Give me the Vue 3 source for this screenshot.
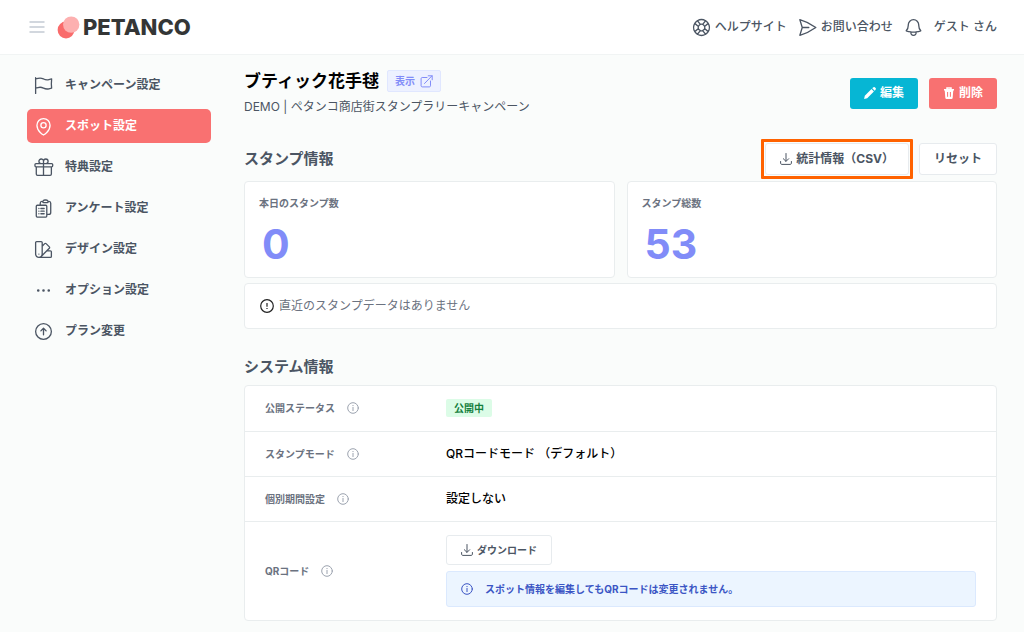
<script setup>
const nav = [
  {
    label: 'キャンペーン設定',
    icon: 'M3 3v1.5M3 21v-6m0 0 2.77-.693a9 9 0 0 1 6.208.682l.108.054a9 9 0 0 0 6.086.71l3.114-.732a48.524 48.524 0 0 1-.005-10.499l-3.11.732a9 9 0 0 1-6.085-.711l-.108-.054a9 9 0 0 0-6.208-.682L3 4.5M3 15V4.5',
  },
  {
    label: 'スポット設定',
    active: true,
    icon: 'M15 10.5a3 3 0 1 1-6 0 3 3 0 0 1 6 0ZM19.5 10.5c0 7.142-7.5 11.25-7.5 11.25S4.5 17.642 4.5 10.5a7.5 7.5 0 1 1 15 0Z',
  },
  {
    label: '特典設定',
    icon: 'M21 11.25v8.25a1.5 1.5 0 0 1-1.5 1.5H5.25a1.5 1.5 0 0 1-1.5-1.5v-8.25M12 4.875A2.625 2.625 0 1 0 9.375 7.5H12m0-2.625V7.5m0-2.625A2.625 2.625 0 1 1 14.625 7.5H12m0 0V21m-8.625-9.75h18c.621 0 1.125-.504 1.125-1.125v-1.5c0-.621-.504-1.125-1.125-1.125h-18c-.621 0-1.125.504-1.125 1.125v1.5c0 .621.504 1.125 1.125 1.125Z',
  },
  {
    label: 'アンケート設定',
    icon: 'M9 12h3.75M9 15h3.75M9 18h3.75m3 .75H18a2.25 2.25 0 0 0 2.25-2.25V6.108c0-1.135-.845-2.098-1.976-2.192a48.424 48.424 0 0 0-1.123-.08m-5.801 0c-.065.21-.1.433-.1.664 0 .414.336.75.75.75h4.5a.75.75 0 0 0 .75-.75 2.25 2.25 0 0 0-.1-.664m-5.8 0A2.251 2.251 0 0 1 13.5 2.25H15c1.012 0 1.867.668 2.15 1.586m-5.8 0c-.376.023-.75.05-1.124.08C9.095 4.01 8.25 4.973 8.25 6.108V8.25m0 0H4.875c-.621 0-1.125.504-1.125 1.125v11.25c0 .621.504 1.125 1.125 1.125h9.75c.621 0 1.125-.504 1.125-1.125V9.375c0-.621-.504-1.125-1.125-1.125H8.25ZM6.75 12h.008v.008H6.75V12Zm0 3h.008v.008H6.75V15Zm0 3h.008v.008H6.75V18Z',
  },
  {
    label: 'デザイン設定',
    icon: 'M4.098 19.902a3.75 3.75 0 0 0 5.304 0l6.401-6.402M6.75 21A3.75 3.75 0 0 1 3 17.25V4.125C3 3.504 3.504 3 4.125 3h5.25c.621 0 1.125.504 1.125 1.125v4.072M6.75 21a3.75 3.75 0 0 0 3.75-3.75V8.197M6.75 21h13.125c.621 0 1.125-.504 1.125-1.125v-5.25c0-.621-.504-1.125-1.125-1.125h-4.072M10.5 8.197l2.88-2.88c.438-.439 1.15-.439 1.59 0l3.712 3.713c.44.44.44 1.152 0 1.59l-2.879 2.88M6.75 17.25h.008v.008H6.75v-.008Z',
  },
  {
    label: 'オプション設定',
    icon: 'M6.75 12a.75.75 0 1 1-1.5 0 .75.75 0 0 1 1.5 0ZM12.75 12a.75.75 0 1 1-1.5 0 .75.75 0 0 1 1.5 0ZM18.75 12a.75.75 0 1 1-1.5 0 .75.75 0 0 1 1.5 0Z',
  },
  {
    label: 'プラン変更',
    icon: 'm15 11.25-3-3m0 0-3 3m3-3v7.5M21 12a9 9 0 1 1-18 0 9 9 0 0 1 18 0Z',
  },
]

const lifebuoy = 'M16.712 4.33a9.027 9.027 0 0 1 1.652 1.306c.51.51.944 1.064 1.306 1.652M16.712 4.33l-3.448 4.138m3.448-4.138a9.014 9.014 0 0 0-9.424 0M19.67 7.288l-4.138 3.448m4.138-3.448a9.014 9.014 0 0 1 0 9.424m-4.138-5.976a3.736 3.736 0 0 0-.88-1.388 3.737 3.737 0 0 0-1.388-.88m2.268 2.268a3.765 3.765 0 0 1 0 2.528m-2.268-4.796a3.765 3.765 0 0 0-2.528 0m4.796 4.796c-.181.506-.475.982-.88 1.388a3.736 3.736 0 0 1-1.388.88m2.268-2.268 4.138 3.448m0 0a9.027 9.027 0 0 1-1.306 1.652c-.51.51-1.064.944-1.652 1.306m0 0-3.448-4.138m3.448 4.138a9.014 9.014 0 0 1-9.424 0m5.976-4.138a3.765 3.765 0 0 1-2.528 0m0 0a3.736 3.736 0 0 1-1.388-.88 3.737 3.737 0 0 1-.88-1.388m2.268 2.268L7.288 19.67m0 0a9.024 9.024 0 0 1-1.652-1.306 9.027 9.027 0 0 1-1.306-1.652m0 0 4.138-3.448M4.33 16.712a9.014 9.014 0 0 1 0-9.424m4.138 5.976a3.765 3.765 0 0 1 0-2.528m0 0c.181-.506.475-.982.88-1.388a3.736 3.736 0 0 1 1.388-.88m-2.268 2.268L4.33 7.288m6.406 1.18L7.288 4.33m0 0a9.024 9.024 0 0 0-1.652 1.306A9.025 9.025 0 0 0 4.33 7.288'

const stats = [
  { label: '本日のスタンプ数', value: 0 },
  { label: 'スタンプ総数', value: 53 },
]

const rows = [
  { id: 'status', label: '公開ステータス', value: '公開中' },
  { id: 'mode', label: 'スタンプモード', value: 'QRコードモード （デフォルト）' },
  { id: 'period', label: '個別期間設定', value: '設定しない' },
  { id: 'qr', label: 'QRコード', value: 'ダウンロード' },
]
</script>

<template>
  <div class="page">
    <header class="topbar">
      <button class="plain menu" type="button" aria-label="メニュー">
        <svg width="16" height="12" viewBox="0 0 16 12"><path d="M.5 1h15M.5 6h15M.5 11h15" fill="none" stroke="#a5afbd" stroke-width="1.2" /></svg>
      </button>
      <a class="brand" href="#">
        <svg width="23" height="23" viewBox="0 0 23 23">
          <circle cx="9" cy="14" r="8.4" fill="#f96b6b" />
          <circle cx="14.2" cy="8.6" r="8.2" fill="#fdb0b0" />
        </svg>
        <span>PETANCO</span>
      </a>
      <nav class="links">
        <a href="#">
          <svg class="ico large" width="21" height="21" viewBox="0 0 24 24"><path :d="lifebuoy" /></svg>
          ヘルプサイト
        </a>
        <a href="#">
          <svg class="ico large" width="21" height="21" viewBox="0 0 24 24"><path d="M6 12 3.269 3.125A59.769 59.769 0 0 1 21.485 12 59.768 59.768 0 0 1 3.27 20.875L5.999 12Zm0 0h7.5" /></svg>
          お問い合わせ
        </a>
        <button class="plain bell" type="button" aria-label="お知らせ">
          <svg class="ico large" width="21" height="21" viewBox="0 0 24 24"><path d="M14.857 17.082a23.848 23.848 0 0 0 5.454-1.310A8.967 8.967 0 0 1 18 9.750V9A6 6 0 0 0 6 9v.75a8.967 8.967 0 0 1-2.312 6.022c1.733.64 3.560 1.085 5.455 1.310m5.714 0a24.255 24.255 0 0 1-5.714 0m5.714 0a3 3 0 1 1-5.714 0" /></svg>
        </button>
        <a href="#">ゲスト さん</a>
      </nav>
    </header>

    <div class="body">
      <nav class="side">
        <a v-for="n in nav" :key="n.label" href="#" :class="{ active: n.active }">
          <svg class="ico large" width="21" height="21" viewBox="0 0 24 24"><path :d="n.icon" /></svg>
          {{ n.label }}
        </a>
      </nav>

      <main>
        <div class="head">
          <div class="titles">
            <div class="title-row">
              <h1>ブティック花手毬</h1>
              <a class="view" href="#">
                表示
                <svg class="ico" width="13" height="13" viewBox="0 0 13 13"><path d="M7 2.500H2.200c-.6 0-1.100.5-1.100 1.100v7.200c0 .6.500 1.100 1.100 1.100h7.200c.6 0 1.100-.5 1.100-1.100V6M4.500 8.500l7.500-7.700M8.200.800h4v4" /></svg>
              </a>
            </div>
            <p>DEMO | ペタンコ商店街スタンプラリーキャンペーン</p>
          </div>
          <div class="actions">
            <button class="solid edit" type="button">
              <svg width="12" height="12" viewBox="0 0 12 12" fill="#fff"><path d="M.1 11.900.8 8.800 7.500 2.100l2.400 2.400-6.700 6.700ZM8.300 1.300 9 .600a1.700 1.700 0 0 1 2.400 2.400l-.7.700Z" /></svg>
              編集
            </button>
            <button class="solid delete" type="button">
              <svg width="12" height="12" viewBox="0 0 12 12"><path d="M1 2.800h10M4 2.600V1h4v1.600" fill="none" stroke="#fff" stroke-width="1.500" /><path d="M1.700 3h8.600l-.6 7.700a1.300 1.300 0 0 1-1.300 1.200H3.600a1.300 1.300 0 0 1-1.300-1.200Z" fill="#fff" /><path d="M4.600 5v4.800M7.400 5v4.800" stroke="#f87171" /></svg>
              削除
            </button>
          </div>
        </div>

        <section>
          <div class="section-head">
            <h2>スタンプ情報</h2>
            <div class="tools">
              <button class="ghost csv" type="button">
                <svg class="ico" width="12" height="12" viewBox="0 0 12 12"><path d="M6 .5v7.700M3.300 5.700 6 8.400l2.700-2.700M.6 8.500v1.800c0 .6.500 1.100 1.100 1.100h8.600c.6 0 1.100-.5 1.100-1.100V8.500" /></svg>
                統計情報（CSV）
              </button>
              <button class="ghost" type="button">リセット</button>
            </div>
          </div>
          <div class="stats">
            <div v-for="s in stats" :key="s.label" class="card stat">
              <h3>{{ s.label }}</h3>
              <strong>{{ s.value }}</strong>
            </div>
          </div>
          <div class="card empty">
            <svg width="14" height="14" viewBox="0 0 14 14"><circle cx="7" cy="7" r="6.300" fill="none" stroke="#222" stroke-width="1.200" /><path d="M7 4v3.700M7 8.900v1.100" stroke="#222" stroke-width="1.200" /></svg>
            直近のスタンプデータはありません
          </div>
        </section>

        <section class="system">
          <h2>システム情報</h2>
          <div class="card">
            <table>
              <tbody>
                <tr v-for="r in rows" :key="r.id">
                  <th scope="row">
                    <span class="key">
                      {{ r.label }}
                      <svg class="ico info" width="12" height="12" viewBox="0 0 12 12"><circle cx="6" cy="6" r="5.300" /><path d="M6 5.400v3.200M6 3.400v.3" /></svg>
                    </span>
                  </th>
                  <td>
                    <span v-if="r.id === 'status'" class="pill">{{ r.value }}</span>
                    <template v-else-if="r.id === 'qr'">
                      <button class="ghost download" type="button">
                        <svg class="ico" width="12" height="12" viewBox="0 0 12 12"><path d="M6 .5v7.700M3.300 5.700 6 8.400l2.700-2.700M.6 8.500v1.800c0 .6.500 1.100 1.100 1.100h8.600c.6 0 1.100-.5 1.100-1.100V8.500" /></svg>
                        {{ r.value }}
                      </button>
                      <div class="notice">
                        <svg class="ico" width="12" height="12" viewBox="0 0 12 12"><circle cx="6" cy="6" r="5.300" /><path d="M6 5.400v3.200M6 3.400v.3" /></svg>
                        スポット情報を編集してもQRコードは変更されません。
                      </div>
                    </template>
                    <template v-else>{{ r.value }}</template>
                  </td>
                </tr>
              </tbody>
            </table>
          </div>
        </section>
      </main>
    </div>
  </div>
</template>

<style>
body {
  margin: 0;
  background: #fafcfb;
}
</style>

<style scoped>
.page {
  min-height: 100vh;
  box-sizing: border-box;
  color: #4b5563;
  font: 12px/18px Inter, "Noto Sans CJK JP", sans-serif;
}
.page * {
  box-sizing: border-box;
}
svg {
  display: block;
  flex: none;
}
.ico {
  fill: none;
  stroke: currentColor;
  stroke-linecap: round;
  stroke-linejoin: round;
}
.large {
  stroke-width: 1.5;
}
a {
  color: inherit;
  text-decoration: none;
}
button {
  font: inherit;
  cursor: pointer;
}
h1, h2, h3, p {
  margin: 0;
}
.plain {
  padding: 0;
  border: 0;
  background: none;
  color: inherit;
}
.topbar {
  display: flex;
  align-items: center;
  height: 55px;
  padding: 0 27px 0 29px;
  background: #fff;
  border-bottom: 1px solid #f1f4f4;
}
.brand {
  display: flex;
  align-items: center;
  gap: 3px;
  margin-left: 12px;
  color: #343636;
  font-size: 22px;
  font-weight: 800;
  line-height: 24px;
}
.links {
  display: flex;
  align-items: center;
  gap: 10px;
  margin-left: auto;
  font-weight: 500;
}
.links a {
  display: flex;
  align-items: center;
  gap: 3px;
}
.body {
  display: flex;
  gap: 33px;
  padding: 13px 27px 10px;
}
.side {
  display: flex;
  flex: 0 0 184px;
  flex-direction: column;
  gap: 7px;
  font-weight: 700;
}
.side a {
  display: flex;
  align-items: center;
  gap: 11px;
  height: 34px;
  padding: 0 6px;
  border-radius: 5px;
}
.side .active {
  color: #fff;
  background: #f97171;
}
main {
  flex: 1;
  min-width: 0;
  padding-top: 2px;
}
.head, .section-head {
  display: flex;
  align-items: center;
  justify-content: space-between;
}
.title-row {
  display: flex;
  align-items: center;
  gap: 8px;
}
h1 {
  color: #000;
  font-size: 17px;
  line-height: 22px;
}
.view {
  display: flex;
  align-items: center;
  gap: 5px;
  height: 22px;
  padding: 0 7px;
  color: #818cf8;
  font-size: 10px;
  font-weight: 700;
  background: #edf1ff;
  border: 1px solid #e0e7ff;
  border-radius: 2px;
}
.titles p {
  margin-top: 6px;
}
.actions {
  display: flex;
  gap: 11px;
}
.solid {
  display: flex;
  align-items: center;
  justify-content: center;
  gap: 4px;
  width: 68px;
  height: 31px;
  padding: 0;
  color: #fff;
  font-weight: 700;
  border: 0;
  border-radius: 3px;
}
.edit {
  background: #06b6d4;
}
.delete {
  background: #f87171;
}
.section-head {
  margin-top: 27px;
}
h2 {
  font-size: 15px;
  line-height: 22px;
}
.tools {
  display: flex;
  gap: 10px;
}
.ghost {
  display: flex;
  align-items: center;
  gap: 4px;
  height: 32px;
  padding: 0 14px;
  color: #4b5563;
  font-weight: 700;
  background: #fff;
  border: 1px solid #e7ebee;
  border-radius: 3px;
}
.csv {
  position: relative;
}
.csv::after {
  position: absolute;
  inset: -5px;
  border: 3px solid #ff6200;
  border-radius: 1px;
  content: "";
}
.card {
  background: #fff;
  border: 1px solid #e9edee;
  border-radius: 4px;
}
.stats {
  display: grid;
  grid-template-columns: 1fr 1fr;
  gap: 12px;
  margin-top: 6px;
}
.stat {
  height: 97px;
  padding: 12px 14px;
}
h3 {
  color: #6b7280;
  font-size: 10px;
  line-height: 18px;
}
.stat strong {
  display: block;
  margin-top: 7px;
  padding-left: 3px;
  color: #818cf8;
  font-size: 41px;
  line-height: 50px;
}
.empty {
  display: flex;
  align-items: center;
  gap: 5px;
  height: 46px;
  margin-top: 5px;
  padding: 0 15px;
  color: #6b7280;
}
.system {
  margin-top: 27px;
}
.system .card {
  margin-top: 7px;
}
table {
  width: 100%;
  border-collapse: collapse;
}
th, td {
  height: 45px;
  padding: 0;
  text-align: left;
}
tr + tr {
  border-top: 1px solid #e9edee;
}
th {
  width: 201px;
  padding-left: 20px;
  color: #6b7280;
  font-size: 10px;
}
.key {
  display: flex;
  align-items: center;
  gap: 12px;
}
.info {
  color: #9ca3af;
}
td {
  padding-right: 20px;
  color: #000;
  font-weight: 500;
}
.pill {
  display: inline-block;
  padding: 0 8px;
  color: #15803d;
  font-size: 10px;
  font-weight: 700;
  background: #dcfce7;
  border-radius: 2px;
}
tr:last-child td {
  padding-top: 13px;
  padding-bottom: 13px;
}
.download {
  height: 30px;
  font-size: 10px;
}
.notice {
  display: flex;
  align-items: center;
  gap: 12px;
  height: 36px;
  margin-top: 6px;
  padding: 0 14px;
  color: #3b55c4;
  font-size: 10px;
  font-weight: 700;
  background: #ecf5ff;
  border: 1px solid #dbe9fe;
  border-radius: 3px;
}
</style>
